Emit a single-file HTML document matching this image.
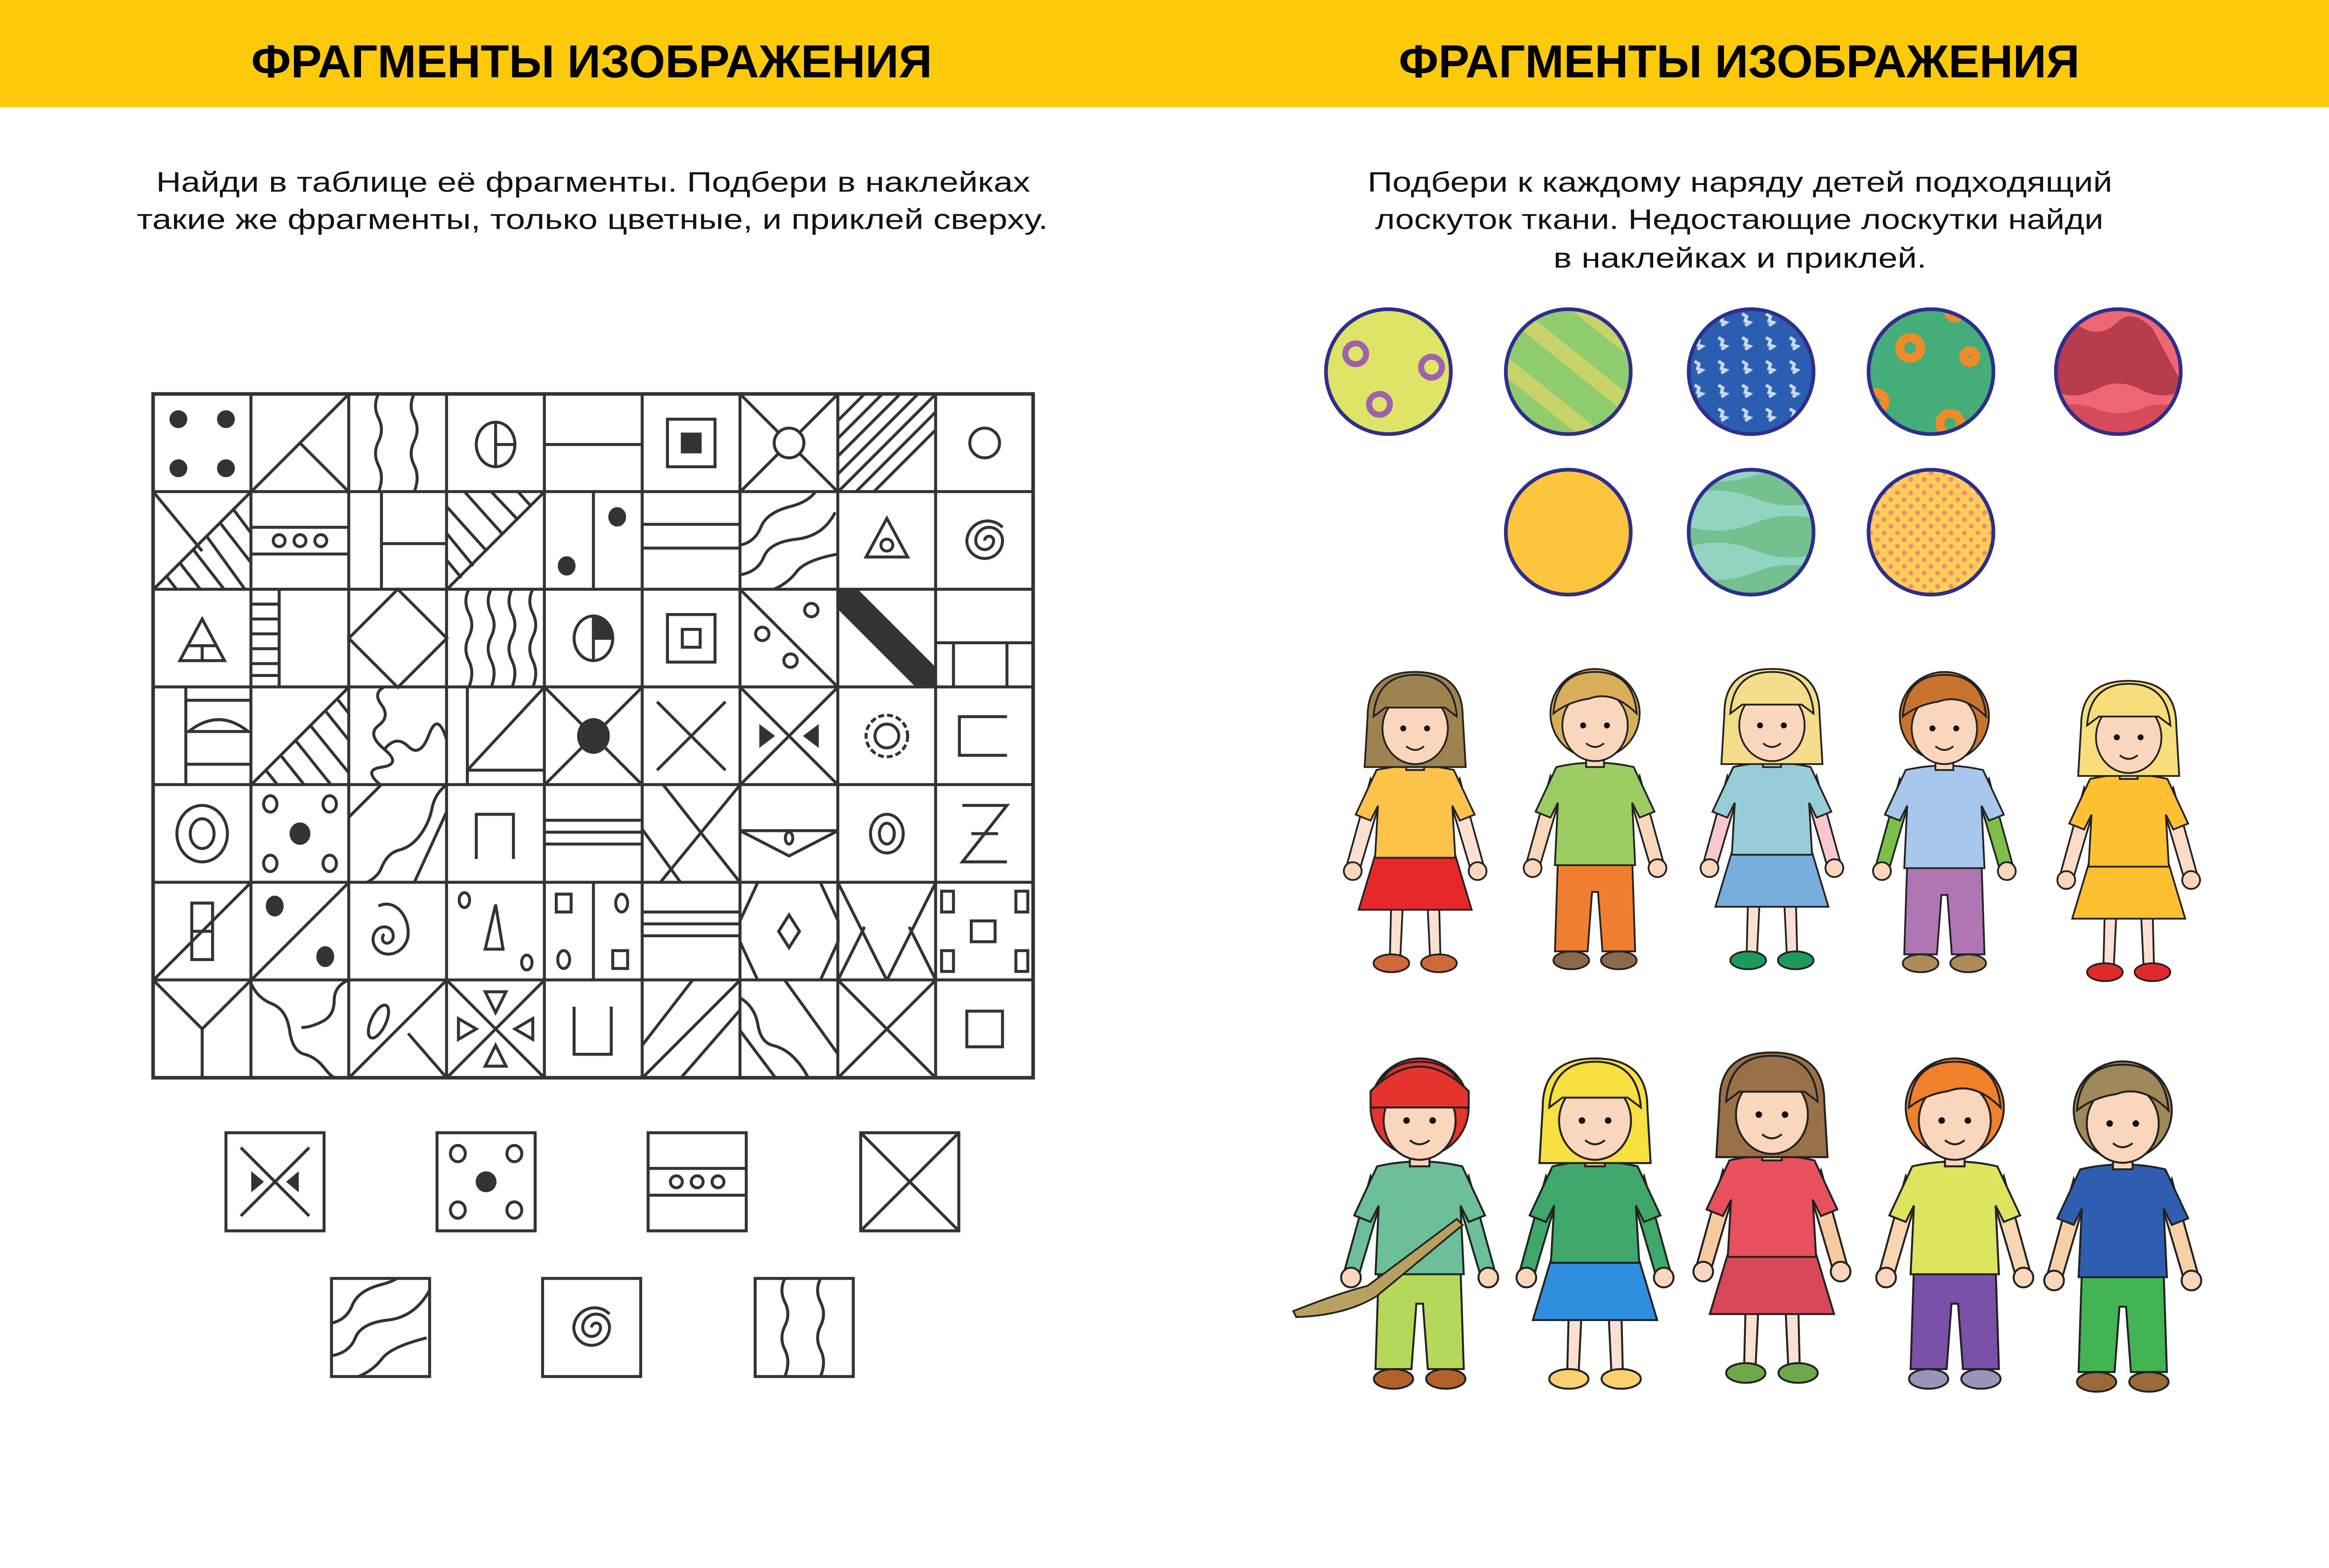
<!DOCTYPE html>
<html><head><meta charset="utf-8"><style>
html,body{margin:0;padding:0;background:#fff;width:5079px;height:3366px;overflow:hidden}
svg{display:block}
.t{font-family:"Liberation Sans",sans-serif;font-size:19px;fill:#111}
.h{font-family:"Liberation Sans",sans-serif;font-weight:bold;font-size:31px;fill:#000}
.g line,.g path,.g rect,.g circle,.g ellipse,.g polygon,.g polyline{stroke:#333;stroke-width:2;fill:none}
.g .f{fill:#333}
.k *{stroke:#222;stroke-width:1.2}
</style></head><body>
<svg width="5079" height="3366" viewBox="0 0 1591.5 1054.8" preserveAspectRatio="none" xmlns="http://www.w3.org/2000/svg">
<defs>
<clipPath id="cc"><rect x="0" y="0" width="65.8" height="65.7"/></clipPath>
<symbol id="kidP" overflow="visible">
 <path d="M-30 72 L-46 130 L-37 132 L-24 88 Z" fill="var(--arm)"/>
 <path d="M30 72 L46 130 L37 132 L24 88 Z" fill="var(--arm)"/>
 <circle cx="-42" cy="134" r="6" fill="#f9d6bc"/><circle cx="42" cy="134" r="6" fill="#f9d6bc"/>
 <path d="M-25 128 L25 128 L27 190 L5 190 L2 150 L-2 150 L-5 190 L-27 190 Z" fill="var(--pants)"/>
 <ellipse cx="-16" cy="196" rx="12" ry="6" fill="var(--shoe)"/><ellipse cx="16" cy="196" rx="12" ry="6" fill="var(--shoe)"/>
 <path d="M-26 66 Q0 60 26 66 L40 96 L30 100 L25 90 L27 132 L-27 132 L-25 90 L-30 100 L-40 96 Z" fill="var(--shirt)"/>
 <rect x="-6" y="56" width="12" height="10" fill="#f9d6bc"/>
 <ellipse cx="0" cy="30" rx="30" ry="30" fill="var(--hair)"/>
 <ellipse cx="0" cy="38" rx="22" ry="24" fill="#f9d6bc"/>
 <path d="M-28 30 Q-26 2 0 2 Q26 2 28 30 Q12 14 -4 20 Q-18 22 -28 30 Z" fill="var(--hair)"/>
 <circle cx="-8" cy="38" r="2" fill="#111" stroke="none"/><circle cx="8" cy="38" r="2" fill="#111" stroke="none"/>
 <path d="M-6 50 Q0 55 6 50" fill="none"/>
</symbol>
<symbol id="kidS" overflow="visible">
 <path d="M-30 72 L-46 130 L-37 132 L-24 88 Z" fill="var(--arm)"/>
 <path d="M30 72 L46 130 L37 132 L24 88 Z" fill="var(--arm)"/>
 <circle cx="-42" cy="134" r="6" fill="#f9d6bc"/><circle cx="42" cy="134" r="6" fill="#f9d6bc"/>
 <path d="M-16 150 L-8 150 L-10 192 L-17 192 Z" fill="#fbe0d2"/><path d="M16 150 L8 150 L10 192 L17 192 Z" fill="#fbe0d2"/>
 <ellipse cx="-16" cy="196" rx="12" ry="6" fill="var(--shoe)"/><ellipse cx="16" cy="196" rx="12" ry="6" fill="var(--shoe)"/>
 <path d="M-26 120 L26 120 L38 160 L-38 160 Z" fill="var(--pants)"/>
 <path d="M-26 66 Q0 60 26 66 L40 96 L30 100 L25 90 L27 125 L-27 125 L-25 90 L-30 100 L-40 96 Z" fill="var(--shirt)"/>
 <rect x="-6" y="56" width="12" height="10" fill="#f9d6bc"/>
 <path d="M-32 30 Q-32 0 0 0 Q32 0 32 30 L34 64 L-34 64 Z" fill="var(--hair)"/>
 <ellipse cx="0" cy="38" rx="22" ry="24" fill="#f9d6bc"/>
 <path d="M-28 30 Q-26 2 0 2 Q26 2 28 30 L20 24 L-20 24 Z" fill="var(--hair)"/>
 <circle cx="-8" cy="38" r="2" fill="#111" stroke="none"/><circle cx="8" cy="38" r="2" fill="#111" stroke="none"/>
 <path d="M-6 50 Q0 55 6 50" fill="none"/>
</symbol>
</defs>

<rect x="0" y="0" width="1600" height="72" fill="#fdc90b"/>
<text class="h" x="398" y="52" text-anchor="middle" textLength="458" lengthAdjust="spacingAndGlyphs">ФРАГМЕНТЫ ИЗОБРАЖЕНИЯ</text>
<text class="h" x="1170" y="52" text-anchor="middle" textLength="458" lengthAdjust="spacingAndGlyphs">ФРАГМЕНТЫ ИЗОБРАЖЕНИЯ</text>

<text class="t" x="105" y="129" textLength="588" lengthAdjust="spacingAndGlyphs">Найди  в  таблице  её  фрагменты.  Подбери  в  наклейках</text>
<text class="t" x="92" y="154" textLength="613" lengthAdjust="spacingAndGlyphs">такие  же  фрагменты,  только  цветные,  и  приклей  сверху.</text>
<text class="t" x="920" y="129" textLength="501" lengthAdjust="spacingAndGlyphs">Подбери  к  каждому  наряду  детей  подходящий</text>
<text class="t" x="925" y="154" textLength="490" lengthAdjust="spacingAndGlyphs">лоскуток  ткани.  Недостающие  лоскутки  найди</text>
<text class="t" x="1045" y="180" textLength="251" lengthAdjust="spacingAndGlyphs">в  наклейках  и  приклей.</text>

<!-- GRID -->
<g class="g">
<rect x="103" y="265" width="592" height="460" style="stroke-width:2.4"/>
<g>
<line x1="168.8" y1="265" x2="168.8" y2="725"/><line x1="234.6" y1="265" x2="234.6" y2="725"/><line x1="300.4" y1="265" x2="300.4" y2="725"/><line x1="366.2" y1="265" x2="366.2" y2="725"/><line x1="432" y1="265" x2="432" y2="725"/><line x1="497.8" y1="265" x2="497.8" y2="725"/><line x1="563.6" y1="265" x2="563.6" y2="725"/><line x1="629.4" y1="265" x2="629.4" y2="725"/>
<line x1="103" y1="330.7" x2="695" y2="330.7"/><line x1="103" y1="396.4" x2="695" y2="396.4"/><line x1="103" y1="462.1" x2="695" y2="462.1"/><line x1="103" y1="527.8" x2="695" y2="527.8"/><line x1="103" y1="593.5" x2="695" y2="593.5"/><line x1="103" y1="659.2" x2="695" y2="659.2"/>
</g>
<!-- row 0 -->
<g transform="translate(103,265)"><circle class="f" cx="17" cy="17" r="5"/><circle class="f" cx="49" cy="17" r="5"/><circle class="f" cx="17" cy="50" r="5"/><circle class="f" cx="49" cy="50" r="5"/></g>
<g transform="translate(168.8,265)"><line x1="0" y1="66" x2="66" y2="0"/><line x1="33" y1="33" x2="66" y2="66"/></g>
<g transform="translate(234.6,265)"><path d="M20 0 q-4 8 0 16 t0 16 t0 16 t0 18"/><path d="M44 0 q-4 8 0 16 t0 16 t0 16 t0 18"/></g>
<g transform="translate(300.4,265)"><ellipse cx="33" cy="34" rx="13" ry="15"/><line x1="33" y1="19" x2="33" y2="49"/><line x1="33" y1="34" x2="46" y2="34"/></g>
<g transform="translate(366.2,265)"><line x1="0" y1="34" x2="66" y2="34"/></g>
<g transform="translate(432,265)"><rect x="17" y="17" width="32" height="32"/><rect class="f" x="27" y="27" width="12" height="12"/></g>
<g transform="translate(497.8,265)"><line x1="0" y1="0" x2="66" y2="66"/><line x1="66" y1="0" x2="0" y2="66"/><circle cx="33" cy="33" r="10" style="fill:#fff"/></g>
<g transform="translate(563.6,265)" clip-path="url(#cc)"><line x1="0" y1="66" x2="66" y2="0"/><line x1="0" y1="54" x2="54" y2="0"/><line x1="0" y1="42" x2="42" y2="0"/><line x1="0" y1="30" x2="30" y2="0"/><line x1="0" y1="18" x2="18" y2="0"/><line x1="12" y1="66" x2="66" y2="12"/><line x1="24" y1="66" x2="66" y2="24"/></g>
<g transform="translate(629.4,265)"><circle cx="33" cy="33" r="10"/></g>
<!-- row 1 -->
<g transform="translate(103,330.7)" clip-path="url(#cc)"><line x1="0" y1="0" x2="33" y2="40"/><line x1="0" y1="66" x2="66" y2="0"/><line x1="9" y1="57" x2="16" y2="66"/><line x1="18" y1="48" x2="32" y2="66"/><line x1="27" y1="39" x2="48" y2="66"/><line x1="36" y1="30" x2="62" y2="66"/><line x1="45" y1="21" x2="66" y2="48"/><line x1="54" y1="12" x2="66" y2="28"/></g>
<g transform="translate(168.8,330.7)"><line x1="0" y1="24" x2="66" y2="24"/><line x1="0" y1="42" x2="66" y2="42"/><circle cx="19" cy="33" r="4"/><circle cx="33" cy="33" r="4"/><circle cx="47" cy="33" r="4"/></g>
<g transform="translate(234.6,330.7)"><line x1="22" y1="0" x2="22" y2="66"/><line x1="22" y1="35" x2="66" y2="35"/></g>
<g transform="translate(300.4,330.7)" clip-path="url(#cc)"><line x1="0" y1="66" x2="66" y2="0"/><line x1="0" y1="10" x2="27" y2="40"/><line x1="0" y1="28" x2="18" y2="50"/><line x1="0" y1="46" x2="10" y2="58"/><line x1="12" y1="0" x2="38" y2="29"/><line x1="30" y1="0" x2="48" y2="19"/><line x1="48" y1="0" x2="57" y2="10"/></g>
<g transform="translate(366.2,330.7)"><line x1="33" y1="0" x2="33" y2="66"/><ellipse class="f" cx="15" cy="50" rx="5" ry="5.5"/><ellipse class="f" cx="49" cy="17" rx="5" ry="5.5"/></g>
<g transform="translate(432,330.7)"><line x1="0" y1="22" x2="66" y2="22"/><line x1="0" y1="38" x2="66" y2="38"/></g>
<g transform="translate(497.8,330.7)" clip-path="url(#cc)"><path d="M0 36 q10-2 14-12 t20-14 t20-16"/><path d="M0 56 q12-2 16-12 t22-12 t26-18"/><path d="M22 66 q10-4 16-12 t28-12"/></g>
<g transform="translate(563.6,330.7)"><polygon points="33,18 47,44 19,44"/><circle cx="33" cy="36" r="4"/></g>
<g transform="translate(629.4,330.7)"><path d="M33 33 a3 3 0 0 1 6 0 a6 6 0 0 1 -12 0 a9 9 0 0 1 18 0 a12 12 0 0 1 -24 0 a14 14 0 0 1 24 -9"/></g>
<!-- row 2 -->
<g transform="translate(103,396.4)"><polygon points="33,20 48,48 18,48"/><line x1="24" y1="38" x2="42" y2="38"/><line x1="33" y1="38" x2="33" y2="48"/></g>
<g transform="translate(168.8,396.4)"><line x1="19" y1="0" x2="19" y2="66"/><line x1="0" y1="10" x2="19" y2="10"/><line x1="0" y1="20" x2="19" y2="20"/><line x1="0" y1="30" x2="19" y2="30"/><line x1="0" y1="40" x2="19" y2="40"/><line x1="0" y1="50" x2="19" y2="50"/><line x1="0" y1="58" x2="19" y2="58"/></g>
<g transform="translate(234.6,396.4)"><polygon points="33,0 66,33 33,66 0,33"/></g>
<g transform="translate(300.4,396.4)"><path d="M15 0 q-4 8 0 16 t0 16 t0 16 t0 18"/><path d="M30 0 q-4 8 0 16 t0 16 t0 16 t0 18"/><path d="M44 0 q-4 8 0 16 t0 16 t0 16 t0 18"/><path d="M58 0 q-4 8 0 16 t0 16 t0 16 t0 18"/></g>
<g transform="translate(366.2,396.4)"><ellipse cx="33" cy="33" rx="13" ry="15"/><line x1="33" y1="18" x2="33" y2="48"/><line x1="33" y1="33" x2="46" y2="33"/><path class="f" d="M33 18 A13 15 0 0 1 46 33 L33 33 Z"/></g>
<g transform="translate(432,396.4)"><rect x="17" y="17" width="32" height="32"/><rect x="27" y="27" width="12" height="12"/></g>
<g transform="translate(497.8,396.4)" clip-path="url(#cc)"><line x1="0" y1="0" x2="66" y2="66"/><circle cx="15" cy="30" r="4.5"/><circle cx="34" cy="48" r="4.5"/><circle cx="48" cy="14" r="4.5"/></g>
<g transform="translate(563.6,396.4)" clip-path="url(#cc)"><polygon class="f" points="0,0 12,0 66,54 66,66 54,66 0,12"/></g>
<g transform="translate(629.4,396.4)"><line x1="0" y1="36" x2="66" y2="36"/><line x1="12" y1="36" x2="12" y2="66"/><line x1="48" y1="36" x2="48" y2="66"/></g>
<!-- row 3 -->
<g transform="translate(103,462.1)"><line x1="22" y1="0" x2="22" y2="66"/><line x1="22" y1="9" x2="66" y2="9"/><line x1="22" y1="52" x2="66" y2="52"/><path d="M24 30 Q44 14 64 30 Z"/></g>
<g transform="translate(168.8,462.1)" clip-path="url(#cc)"><line x1="0" y1="66" x2="66" y2="0"/><line x1="10" y1="56" x2="18" y2="66"/><line x1="20" y1="46" x2="36" y2="66"/><line x1="30" y1="36" x2="54" y2="66"/><line x1="40" y1="26" x2="66" y2="58"/><line x1="50" y1="16" x2="66" y2="36"/><line x1="58" y1="8" x2="66" y2="18"/></g>
<g transform="translate(234.6,462.1)" clip-path="url(#cc)"><path d="M24 0 q-8 4 -2 12 t-2 14 t4 16 t-2 12 t2 14"/><path d="M24 42 q8-10 16-2 t14 -8 t12 4"/></g>
<g transform="translate(300.4,462.1)"><line x1="14" y1="0" x2="14" y2="66"/><line x1="14" y1="56" x2="66" y2="0"/><line x1="14" y1="56" x2="66" y2="56"/></g>
<g transform="translate(366.2,462.1)"><line x1="0" y1="0" x2="66" y2="66"/><line x1="66" y1="0" x2="0" y2="66"/><ellipse class="f" cx="33" cy="33" rx="10" ry="11"/></g>
<g transform="translate(432,462.1)"><line x1="10" y1="10" x2="56" y2="56"/><line x1="56" y1="10" x2="10" y2="56"/></g>
<g transform="translate(497.8,462.1)"><line x1="0" y1="0" x2="66" y2="66"/><line x1="66" y1="0" x2="0" y2="66"/><polygon class="f" points="14,27 22,33 14,39"/><polygon class="f" points="52,27 44,33 52,39"/></g>
<g transform="translate(563.6,462.1)"><circle cx="33" cy="33" r="14" style="stroke-dasharray:4 2"/><circle cx="33" cy="33" r="8"/></g>
<g transform="translate(629.4,462.1)"><polyline points="48,20 16,20 16,46 48,46"/></g>
<!-- row 4 -->
<g transform="translate(103,527.8)"><ellipse cx="33" cy="33" rx="17" ry="19"/><ellipse cx="33" cy="33" rx="8" ry="10"/></g>
<g transform="translate(168.8,527.8)"><ellipse cx="13" cy="13" rx="4.5" ry="5.5"/><ellipse cx="53" cy="13" rx="4.5" ry="5.5"/><ellipse cx="13" cy="53" rx="4.5" ry="5.5"/><ellipse cx="53" cy="53" rx="4.5" ry="5.5"/><ellipse class="f" cx="33" cy="33" rx="6" ry="6.5"/></g>
<g transform="translate(234.6,527.8)" clip-path="url(#cc)"><line x1="0" y1="22" x2="24" y2="-2"/><path d="M66 0 q-8 6 -10 16 t-8 18 t-14 10 t-12 12 t-22 14"/><line x1="44" y1="66" x2="66" y2="18"/></g>
<g transform="translate(300.4,527.8)"><polyline points="20,50 20,20 45,20 45,50"/></g>
<g transform="translate(366.2,527.8)"><line x1="0" y1="24" x2="66" y2="24"/><line x1="0" y1="32" x2="66" y2="32"/><line x1="0" y1="40" x2="66" y2="40"/></g>
<g transform="translate(432,527.8)"><line x1="14" y1="0" x2="66" y2="66"/><line x1="66" y1="0" x2="12" y2="66"/><line x1="0" y1="30" x2="26" y2="66"/></g>
<g transform="translate(497.8,527.8)"><polygon points="0,31 66,31 33,48"/><ellipse cx="33" cy="36" rx="2.5" ry="4"/></g>
<g transform="translate(563.6,527.8)"><ellipse cx="33" cy="33" rx="11" ry="13"/><ellipse cx="33" cy="33" rx="5" ry="7"/></g>
<g transform="translate(629.4,527.8)"><polyline points="18,14 48,14 18,52 48,52"/><line x1="24" y1="33" x2="42" y2="33"/></g>
<!-- row 5 -->
<g transform="translate(103,593.5)"><line x1="0" y1="66" x2="66" y2="0"/><rect x="26" y="14" width="14" height="38"/><line x1="26" y1="33" x2="40" y2="33"/></g>
<g transform="translate(168.8,593.5)"><line x1="0" y1="66" x2="66" y2="0"/><ellipse class="f" cx="16" cy="16" rx="5" ry="6"/><ellipse class="f" cx="50" cy="50" rx="5" ry="6"/></g>
<g transform="translate(234.6,593.5)"><path d="M20 16 c10-5 20 5 20 18 c0 12 -13 18 -20 12 c-7-6 -3-16 4-16 c7 0 8 10 2 11 c-4 0 -4-5 -2-6"/></g>
<g transform="translate(300.4,593.5)"><ellipse cx="12" cy="12" rx="3.5" ry="5"/><ellipse cx="54" cy="54" rx="3.5" ry="5"/><polygon points="33,15 38,45 26,45"/></g>
<g transform="translate(366.2,593.5)"><line x1="33" y1="0" x2="33" y2="66"/><rect x="8" y="8" width="10" height="12"/><ellipse cx="52" cy="14" rx="4" ry="6"/><ellipse cx="13" cy="52" rx="4" ry="6"/><rect x="46" y="46" width="10" height="12"/></g>
<g transform="translate(432,593.5)"><line x1="0" y1="20" x2="66" y2="20"/><line x1="0" y1="28" x2="66" y2="28"/><line x1="0" y1="36" x2="66" y2="36"/></g>
<g transform="translate(497.8,593.5)"><polyline points="12,0 0,26 0,40 12,66"/><polyline points="54,0 66,26 66,40 54,66"/><polygon points="33,22 40,33 33,44 26,33"/></g>
<g transform="translate(563.6,593.5)"><polyline points="0,0 33,66"/><polyline points="66,0 33,66"/><line x1="0" y1="66" x2="18" y2="30"/><line x1="66" y1="66" x2="48" y2="30"/></g>
<g transform="translate(629.4,593.5)"><rect x="4" y="6" width="8" height="14"/><rect x="54" y="6" width="8" height="14"/><rect x="24" y="26" width="16" height="14"/><rect x="4" y="46" width="8" height="14"/><rect x="54" y="46" width="8" height="14"/></g>
<!-- row 6 -->
<g transform="translate(103,659.2)"><polyline points="0,0 33,33 66,0"/><line x1="33" y1="33" x2="33" y2="66"/></g>
<g transform="translate(168.8,659.2)" clip-path="url(#cc)"><path d="M0 2 q4 10 14 14 t12 18 t10 16 t14 10 t14 8"/><path d="M66 0 q-10 4 -10 14 t-8 14 t-14 4"/></g>
<g transform="translate(234.6,659.2)"><line x1="0" y1="66" x2="66" y2="0"/><line x1="40" y1="36" x2="66" y2="66"/><ellipse cx="20" cy="28" rx="5" ry="12" transform="rotate(25 20 28)"/></g>
<g transform="translate(300.4,659.2)"><line x1="0" y1="0" x2="66" y2="66"/><line x1="66" y1="0" x2="0" y2="66"/><polygon points="26,8 40,8 33,22"/><polygon points="26,58 40,58 33,44"/><polygon points="8,26 8,40 20,33"/><polygon points="58,26 58,40 46,33"/></g>
<g transform="translate(366.2,659.2)"><polyline points="20,18 20,50 45,50 45,18"/></g>
<g transform="translate(432,659.2)"><line x1="0" y1="66" x2="66" y2="0"/><line x1="26" y1="66" x2="66" y2="20"/><line x1="0" y1="44" x2="34" y2="0"/></g>
<g transform="translate(497.8,659.2)" clip-path="url(#cc)"><path d="M0 12 q10 6 12 18 t10 14 t14 8 t10 14"/><line x1="0" y1="34" x2="24" y2="66"/><line x1="30" y1="0" x2="66" y2="50"/></g>
<g transform="translate(563.6,659.2)"><line x1="0" y1="0" x2="66" y2="66"/><line x1="66" y1="0" x2="0" y2="66"/></g>
<g transform="translate(629.4,659.2)"><rect x="21" y="21" width="24" height="24"/></g>
</g>

<!-- bottom fragments -->
<g class="g">
<g transform="translate(152,762)"><rect x="0" y="0" width="66" height="66"/><line x1="10" y1="10" x2="56" y2="56"/><line x1="56" y1="10" x2="10" y2="56"/><polygon class="f" points="18,28 24,33 18,38"/><polygon class="f" points="48,28 42,33 48,38"/></g>
<g transform="translate(294,762)"><rect x="0" y="0" width="66" height="66"/><ellipse cx="14" cy="14" rx="5" ry="5.5"/><ellipse cx="52" cy="14" rx="5" ry="5.5"/><ellipse cx="14" cy="52" rx="5" ry="5.5"/><ellipse cx="52" cy="52" rx="5" ry="5.5"/><circle class="f" cx="33" cy="33" r="6"/></g>
<g transform="translate(436,762)"><rect x="0" y="0" width="66" height="66"/><line x1="0" y1="24" x2="66" y2="24"/><line x1="0" y1="42" x2="66" y2="42"/><circle cx="19" cy="33" r="4"/><circle cx="33" cy="33" r="4"/><circle cx="47" cy="33" r="4"/></g>
<g transform="translate(579,762)"><rect x="0" y="0" width="66" height="66"/><line x1="0" y1="0" x2="33" y2="33"/><line x1="0" y1="66" x2="66" y2="0"/><line x1="33" y1="33" x2="66" y2="66"/></g>
<g transform="translate(223,860)"><rect x="0" y="0" width="66" height="66"/><g clip-path="url(#cc)"><path d="M0 30 q10-2 14-12 t20-14 t20-16"/><path d="M0 52 q12-2 16-12 t22-12 t28-20"/><path d="M18 66 q10-4 16-12 t30-14"/></g></g>
<g transform="translate(365,860)"><rect x="0" y="0" width="66" height="66"/><path d="M33 33 a3 3 0 0 1 6 0 a6 6 0 0 1 -12 0 a9 9 0 0 1 18 0 a12 12 0 0 1 -24 0 a14 14 0 0 1 24 -9"/></g>
<g transform="translate(508,860)"><rect x="0" y="0" width="66" height="66"/><path d="M20 0 q-4 8 0 16 t0 16 t0 16 t0 18"/><path d="M44 0 q-4 8 0 16 t0 16 t0 16 t0 18"/></g>
</g>

<!-- patches -->
<defs>
<clipPath id="p1"><circle cx="934" cy="250" r="42"/></clipPath>
<clipPath id="p2"><circle cx="1055" cy="250" r="42"/></clipPath>
<clipPath id="p4"><circle cx="1299" cy="250" r="42"/></clipPath>
<clipPath id="p5"><circle cx="1425" cy="250" r="42"/></clipPath>
<clipPath id="p7"><circle cx="1178" cy="358" r="42"/></clipPath>
<pattern id="dots" width="9" height="9" patternUnits="userSpaceOnUse"><circle cx="3" cy="3" r="1.6" fill="#f08a6a"/><circle cx="7.5" cy="7.5" r="1.6" fill="#f08a6a"/></pattern>
<pattern id="blu" width="16" height="16" patternUnits="userSpaceOnUse"><rect width="16" height="16" fill="#2b5eb0"/><path d="M4 3 l3 2 -1 3 3 1 -3 2" stroke="#c8d6f2" stroke-width="2.2" fill="none"/></pattern>
</defs>
<circle cx="934" cy="250" r="42" fill="#dde466"/>
<g clip-path="url(#p1)" fill="none" stroke="#a060b0" stroke-width="4"><circle cx="912" cy="238" r="7"/><circle cx="963" cy="247" r="7"/><circle cx="928" cy="272" r="7"/></g>
<circle cx="1055" cy="250" r="42" fill="#8fcc6e"/>
<g clip-path="url(#p2)" stroke="#c8d36a" stroke-width="11"><line x1="1005" y1="200" x2="1105" y2="280"/><line x1="1005" y1="240" x2="1105" y2="320"/><line x1="1005" y1="160" x2="1105" y2="240"/></g>
<circle cx="1178" cy="250" r="42" fill="url(#blu)"/>
<circle cx="1299" cy="250" r="42" fill="#45ad7a"/>
<g clip-path="url(#p4)" fill="none" stroke="#f08a2a" stroke-width="6"><circle cx="1285" cy="234" r="7"/><circle cx="1325" cy="240" r="4"/><circle cx="1262" cy="270" r="6"/><circle cx="1312" cy="285" r="7"/><circle cx="1315" cy="210" r="4"/></g>
<circle cx="1425" cy="250" r="42" fill="#ee6874"/>
<g clip-path="url(#p5)"><path d="M1380 225 q10-10 22-4 t22-4 t24 4 L1470 262 q-15 8 -30 0 t-30 0 t-30 0 Z" fill="#b63c4e"/><path d="M1380 275 q15 -6 30 0 t30 0 t30 0 L1470 300 L1380 300 Z" fill="#d74a5c"/></g>
<circle cx="1055" cy="358" r="42" fill="#fdc43e"/>
<circle cx="1178" cy="358" r="42" fill="#92d3c2"/>
<g clip-path="url(#p7)" fill="#74c08e"><path d="M1130 320 q25 8 50 0 t50 0 L1230 335 q-25 10 -50 0 t-50 0 Z"/><path d="M1130 352 q25 10 50 0 t50 0 L1230 370 q-25 10 -50 0 t-50 0 Z"/><path d="M1130 385 q25 10 50 0 t50 0 L1230 400 L1130 400 Z"/></g>
<circle cx="1299" cy="358" r="42" fill="#fecd5a"/><circle cx="1299" cy="358" r="42" fill="url(#dots)"/>
<g fill="none" stroke="#2e2e8c" stroke-width="2.5">
<circle cx="934" cy="250" r="42"/><circle cx="1055" cy="250" r="42"/><circle cx="1178" cy="250" r="42"/><circle cx="1299" cy="250" r="42"/><circle cx="1425" cy="250" r="42"/>
<circle cx="1055" cy="358" r="42"/><circle cx="1178" cy="358" r="42"/><circle cx="1299" cy="358" r="42"/>
</g>

<!-- kids -->
<g class="k">
<use href="#kidS" transform="translate(952,452)" style="--hair:#9e8250;--shirt:#fcc24a;--pants:#e6282a;--arm:#fbe0d2;--shoe:#d0683a"/>
<use href="#kidP" transform="translate(1073,450)" style="--hair:#d9ae5a;--shirt:#9ccc62;--pants:#ef7e30;--arm:#f8d8b8;--shoe:#8a6a4a"/>
<use href="#kidS" transform="translate(1192,450)" style="--hair:#f4dc8a;--shirt:#96cdd8;--pants:#78aedc;--arm:#f7c8d0;--shoe:#1c9a5a"/>
<use href="#kidP" transform="translate(1308,452)" style="--hair:#c8742e;--shirt:#a7c8ec;--pants:#b076b4;--arm:#7cc04a;--shoe:#b08a5a"/>
<use href="#kidS" transform="translate(1432,458)" style="--hair:#f8de7a;--shirt:#fdc030;--pants:#fdc030;--arm:#fbdcc8;--shoe:#e02a2a"/>
<g transform="translate(955,712) scale(1.1)"><use href="#kidP" style="--hair:#e5332e;--shirt:#6cbf98;--pants:#b6d85a;--arm:#6cbf98;--shoe:#b0622a"/><path d="M-30 20 Q0 -10 30 20 L30 30 L-30 30 Z" fill="#e5332e"/></g>
<use href="#kidS" transform="translate(1073,712) scale(1.1)" style="--hair:#f8e040;--shirt:#3fa86a;--pants:#2f8ee0;--arm:#3fa86a;--shoe:#fcd070"/>
<use href="#kidS" transform="translate(1192,708) scale(1.1)" style="--hair:#9a7048;--shirt:#e8505e;--pants:#d84858;--arm:#f6c9a0;--shoe:#6ea84a"/>
<use href="#kidP" transform="translate(1315,712) scale(1.1)" style="--hair:#f0802a;--shirt:#dde45e;--pants:#7a50a8;--arm:#f8d6b0;--shoe:#9a94b8"/>
<use href="#kidP" transform="translate(1428,714) scale(1.1)" style="--hair:#a0885a;--shirt:#2f5eb0;--pants:#42b454;--arm:#f8d0a8;--shoe:#9a6a3a"/>
<path d="M870 882 Q900 870 920 865 L980 820 L984 824 L926 872 Q905 885 872 886 Z" fill="#b8a060"/>
</g>
</svg>
</body></html>
